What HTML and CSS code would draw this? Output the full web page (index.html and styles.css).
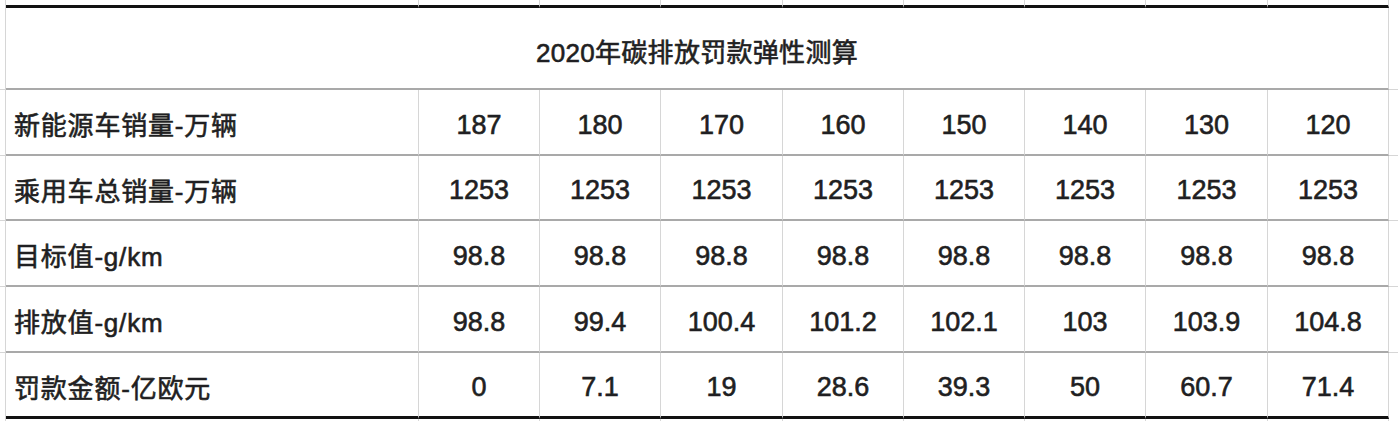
FILE: index.html
```html
<!DOCTYPE html>
<html lang="zh-CN">
<head>
<meta charset="utf-8">
<title>2020年碳排放罚款弹性测算</title>
<link rel="stylesheet" href="styles.css">
</head>
<body>
<table class="sheet">
  <colgroup>
    <col class="c-pad-l">
    <col class="c-label">
    <col class="c-n1"><col class="c-n1"><col class="c-n2"><col class="c-n1">
    <col class="c-n1"><col class="c-n1"><col class="c-n2"><col class="c-n1">
    <col class="c-pad-r">
  </colgroup>
  <tbody>
    <tr class="r-top">
      <td class="pad"></td>
      <td class="edge"></td><td class="edge"></td><td class="edge"></td><td class="edge"></td><td class="edge"></td>
      <td class="edge"></td><td class="edge"></td><td class="edge"></td><td class="edge"></td>
      <td class="pad"></td>
    </tr>
    <tr class="r-title">
      <td class="pad"></td>
      <td class="title" colspan="9">2020年碳排放罚款弹性测算</td>
      <td class="pad"></td>
    </tr>
    <tr class="r-data">
      <td class="pad"></td>
      <td class="label">新能源车销量-万辆</td>
      <td class="num">187</td><td class="num">180</td><td class="num">170</td><td class="num">160</td>
      <td class="num">150</td><td class="num">140</td><td class="num">130</td><td class="num">120</td>
      <td class="pad"></td>
    </tr>
    <tr class="r-data r-short">
      <td class="pad"></td>
      <td class="label">乘用车总销量-万辆</td>
      <td class="num">1253</td><td class="num">1253</td><td class="num">1253</td><td class="num">1253</td>
      <td class="num">1253</td><td class="num">1253</td><td class="num">1253</td><td class="num">1253</td>
      <td class="pad"></td>
    </tr>
    <tr class="r-data">
      <td class="pad"></td>
      <td class="label">目标值-g/km</td>
      <td class="num">98.8</td><td class="num">98.8</td><td class="num">98.8</td><td class="num">98.8</td>
      <td class="num">98.8</td><td class="num">98.8</td><td class="num">98.8</td><td class="num">98.8</td>
      <td class="pad"></td>
    </tr>
    <tr class="r-data">
      <td class="pad"></td>
      <td class="label">排放值-g/km</td>
      <td class="num">98.8</td><td class="num">99.4</td><td class="num">100.4</td><td class="num">101.2</td>
      <td class="num">102.1</td><td class="num">103</td><td class="num">103.9</td><td class="num">104.8</td>
      <td class="pad"></td>
    </tr>
    <tr class="r-data r-last">
      <td class="pad"></td>
      <td class="label">罚款金额-亿欧元</td>
      <td class="num">0</td><td class="num">7.1</td><td class="num">19</td><td class="num">28.6</td>
      <td class="num">39.3</td><td class="num">50</td><td class="num">60.7</td><td class="num">71.4</td>
      <td class="pad"></td>
    </tr>
    <tr class="r-bottom">
      <td class="pad"></td>
      <td></td><td></td><td></td><td></td><td></td><td></td><td></td><td></td><td></td>
      <td class="pad"></td>
    </tr>
  </tbody>
</table>
</body>
</html>
```
FILE: styles.css
```css
html, body {
  margin: 0;
  padding: 0;
  background: #ffffff;
}

.sheet {
  border-collapse: separate;
  border-spacing: 0;
  table-layout: fixed;
  width: 1398px;
  font-family: "Liberation Sans", "Noto Sans CJK SC", sans-serif;
  font-size: 26px;
  font-weight: 400;
  -webkit-text-stroke: 0.6px #1f1f22;
  color: #1f1f22;
}

.c-pad-l { width: 6px; }
.c-label { width: 413px; }
.c-n1 { width: 121px; }
.c-n2 { width: 122px; }
.c-pad-r { width: 9px; }

.sheet td {
  padding: 0;
  box-sizing: border-box;
  border-right: 1px solid #d6d6d6;
  vertical-align: middle;
  overflow: hidden;
  white-space: nowrap;
}

.sheet td:last-child {
  border-right: none;
}

/* top spacer row with heavy black rule */
.r-top td { height: 8px; }
.r-top td.edge { border-bottom: 3px solid #111111; }

.r-title td { height: 82px; border-bottom: 2px solid #a9a9a9; }
.r-title td.pad { border-bottom: 1px solid #d6d6d6; }
.r-title .title {
  text-align: center;
  font-size: 26px;
  letter-spacing: 0.3px;
  padding-top: 4px;
}

.r-data td { height: 66px; border-bottom: 2px solid #a9a9a9; }
.r-data.r-short td { height: 65px; }
.r-data td.pad { border-bottom: 1px solid #d6d6d6; }
.r-data.r-last td { height: 66px; border-bottom: 3px solid #111111; }
.r-data.r-last td.pad { border-bottom: none; }

.r-bottom td { height: 3px; }

.label {
  padding-left: 8px !important;
  padding-top: 3px !important;
  text-align: left;
  letter-spacing: 0.8px;
}

.num {
  text-align: center;
  font-size: 27px;
  padding-top: 6px !important;
}
```
